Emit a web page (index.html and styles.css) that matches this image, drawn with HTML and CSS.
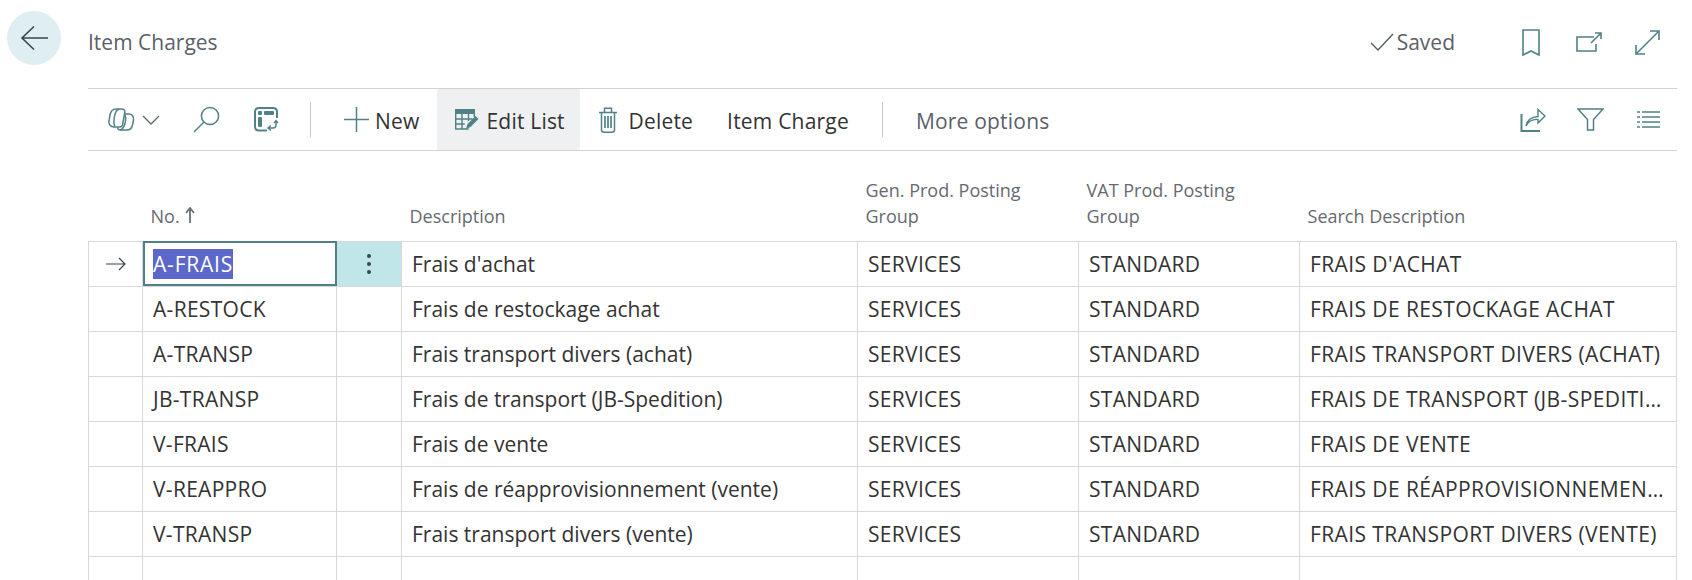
FILE: index.html
```html
<!DOCTYPE html>
<html lang="en">
<head>
<meta charset="utf-8">
<title>Item Charges</title>
<link rel="stylesheet" href="styles.css">
</head>
<body>
<div class="page">
  <a class="back" href="#" aria-label="Back">
    <svg width="30" height="26" viewBox="0 0 30 26"><path d="M14 1.5 2 13l12 11.500M2 13h26" fill="none" stroke="#37474a" stroke-width="1.600"/></svg>
  </a>
  <main class="content">
    <header class="head">
      <h1 class="title">Item Charges</h1>
      <div class="status">
        <svg width="24" height="18" viewBox="0 0 24 18"><path d="M1 10l7 7L23 1" fill="none" stroke="#555d66" stroke-width="1.400"/></svg>
        <span>Saved</span>
      </div>
      <div class="head-icons">
        <svg class="i-book" width="18" height="27" viewBox="0 0 18 27"><path d="M1 1h16v25l-8-4-8 4z" fill="none" stroke="#4f8187" stroke-width="1.600"/></svg>
        <svg class="i-open" width="26" height="20" viewBox="0 0 26 20"><path d="M18 5H1v14h19v-7M15 11 25 1M19 1h6v6" fill="none" stroke="#4f8187" stroke-width="1.600"/></svg>
        <svg class="i-exp" width="25" height="25" viewBox="0 0 25 25"><path d="M1 24 24 1M15 1h9v9M1 15v9h9" fill="none" stroke="#4f8187" stroke-width="1.600"/></svg>
      </div>
    </header>
    <nav class="bar">
      <div class="tool tool-copilot">
        <svg width="27" height="23" viewBox="0 0 27 23"><g fill="none" stroke="#4f8187" stroke-width="1.500"><path d="M8 1h6c2 0 3.200 1.500 2.800 3.500L14.500 17c-.4 1.500-1.500 2-3 2H6c-3.500 0-5.500-2.500-5-6l1-6C2.700 3.500 5 1 8 1z"/><path d="M17 6h4c3 0 5 2.500 4.500 6l-1 5c-.7 3-2.500 5-5.500 5h-7c-1.500 0-2.500-1-2.300-2.500"/><path d="M16.800 7c1.500 2 1 5 .3 8s-2 6-5 7"/><path d="M11 1.200c-3 1-4 4-4.500 7s-1 8.500.5 10.500"/></g></svg>
        <svg width="18" height="10" viewBox="0 0 18 10"><path d="M1 1l8 8 8-8" fill="none" stroke="#5e6b70" stroke-width="1.300"/></svg>
      </div>
      <div class="tool tool-search">
        <svg width="27" height="27" viewBox="0 0 27 27"><circle cx="17" cy="10" r="8.600" fill="none" stroke="#4f8187" stroke-width="1.500"/><path d="M11 16 1 26" fill="none" stroke="#4f8187" stroke-width="1.500"/></svg>
      </div>
      <div class="tool tool-layout">
        <svg width="25" height="25" viewBox="0 0 25 25"><path d="M13 23.500H5c-2.500 0-4-1.500-4-4V5c0-2.500 1.500-4 4-4h14c2.500 0 4 1.500 4 4v6" fill="none" stroke="#4f8187" stroke-width="2"/><rect x="4" y="4" width="4" height="4" rx="1" fill="#4f8187"/><rect x="10" y="4" width="10" height="4" rx="1" fill="#4f8187"/><rect x="4" y="10" width="4" height="10" rx="1" fill="#4f8187"/><path d="M22 14v4c0 2-1 3-3 3h-5M20 16l2-2.500 2 2.500M17 18.500 14 21l3 2.500" fill="none" stroke="#4f8187" stroke-width="1.400"/></svg>
      </div>
      <span class="sep sep-a"></span>
      <button class="btn btn-new">
        <svg width="25" height="25" viewBox="0 0 25 25"><path d="M12.500 0v25M0 12.500h25" stroke="#4f8187" stroke-width="1.500"/></svg>
        <span>New</span>
      </button>
      <button class="btn btn-edit">
        <svg width="24" height="21" viewBox="0 0 24 21"><path d="M0 0h20v5H0z" fill="#4f8187"/><path d="M.7 5v15h13M7 5v15M13.500 5v7M19.300 5v3M.7 10h17M.7 15h9" fill="none" stroke="#4f8187" stroke-width="1.400"/><path d="M11 20l1.500-5 8-8 3 3-8 8z" fill="#4f8187"/></svg>
        <span>Edit List</span>
      </button>
      <button class="btn btn-del">
        <svg width="18" height="26" viewBox="0 0 18 26"><path d="M2.500 6v17c0 1.500 1 2.200 2.500 2.200h8c1.500 0 2.500-.7 2.500-2.200V6M0 5.500h18M5.500 5.500V1.200h7v4.300" fill="none" stroke="#4f8187" stroke-width="1.500"/><path d="M6 9v12M9 9v12M12 9v12" fill="none" stroke="#4f8187" stroke-width="1.700"/></svg>
        <span>Delete</span>
      </button>
      <button class="btn btn-item"><span>Item Charge</span></button>
      <span class="sep sep-b"></span>
      <button class="btn btn-more"><span>More options</span></button>
      <div class="bar-right">
        <svg class="i-share" width="26" height="24" viewBox="0 0 26 24"><path d="M1.500 6v17H20" fill="none" stroke="#4f8187" stroke-width="2"/><path d="M6 18c1-6 5-9 12-9.500V1.500L25 8l-7 7v-3.500c-5-.5-9 1-12 6.500z" fill="none" stroke="#4f8187" stroke-width="1.400"/></svg>
        <svg class="i-filter" width="27" height="23" viewBox="0 0 27 23"><path d="M1 1h25L16.500 11.500V22h-6V11.500z" fill="none" stroke="#4f8187" stroke-width="1.500"/></svg>
        <svg width="23" height="17" viewBox="0 0 23 17"><path d="M0 1h3M5 1h18M0 6h3M5 6h18M0 11h3M5 11h18M0 16h3M5 16h18" stroke="#4f8187" stroke-width="1.300"/></svg>
      </div>
    </nav>
    <table class="grid">
      <colgroup>
        <col class="c-mark"><col class="c-no"><col class="c-dots"><col class="c-desc"><col class="c-gen"><col class="c-vat"><col class="c-search">
      </colgroup>
      <thead>
        <tr>
          <th></th>
          <th class="th-no" colspan="2">No. <svg class="sort" width="10" height="16" viewBox="0 0 10 16"><path d="M5 16V1M1 6l4-5 4 5" fill="none" stroke="#6b7075" stroke-width="1.800"/></svg></th>
          <th>Description</th>
          <th>Gen. Prod. Posting<br>Group</th>
          <th>VAT Prod. Posting<br>Group</th>
          <th>Search Description</th>
        </tr>
      </thead>
      <tbody>
        <tr>
          <td class="mark"><svg width="20" height="14" viewBox="0 0 20 14"><path d="M0 7h19M13 1l6 6-6 6" fill="none" stroke="#37474a" stroke-width="1.200"/></svg></td>
          <td class="focus"><span class="sel">A-FRAIS</span></td>
          <td class="dots"><span class="dot"></span><span class="dot"></span><span class="dot"></span></td>
          <td>Frais d'achat</td><td>SERVICES</td><td>STANDARD</td><td>FRAIS D'ACHAT</td>
        </tr>
        <tr><td></td><td>A-RESTOCK</td><td></td><td>Frais de restockage achat</td><td>SERVICES</td><td>STANDARD</td><td>FRAIS DE RESTOCKAGE ACHAT</td></tr>
        <tr><td></td><td>A-TRANSP</td><td></td><td>Frais transport divers (achat)</td><td>SERVICES</td><td>STANDARD</td><td>FRAIS TRANSPORT DIVERS (ACHAT)</td></tr>
        <tr><td></td><td>JB-TRANSP</td><td></td><td>Frais de transport (JB-Spedition)</td><td>SERVICES</td><td>STANDARD</td><td>FRAIS DE TRANSPORT (JB-SPEDITION)</td></tr>
        <tr><td></td><td>V-FRAIS</td><td></td><td>Frais de vente</td><td>SERVICES</td><td>STANDARD</td><td>FRAIS DE VENTE</td></tr>
        <tr><td></td><td>V-REAPPRO</td><td></td><td>Frais de réapprovisionnement (vente)</td><td>SERVICES</td><td>STANDARD</td><td>FRAIS DE RÉAPPROVISIONNEMENT (VENTE)</td></tr>
        <tr><td></td><td>V-TRANSP</td><td></td><td>Frais transport divers (vente)</td><td>SERVICES</td><td>STANDARD</td><td>FRAIS TRANSPORT DIVERS (VENTE)</td></tr>
        <tr><td></td><td></td><td></td><td></td><td></td><td></td><td></td></tr>
      </tbody>
    </table>
  </main>
</div>
</body>
</html>
```

FILE: styles.css
```css
* { box-sizing: border-box; }
html, body { margin: 0; height: 580px; overflow: hidden; background: #fff; }
body { font-family: "Open Sans", "Noto Sans", sans-serif; color: #333; }
.page { display: flex; align-items: flex-start; height: 580px; overflow: hidden; padding: 11px 15px 0 7px; }
.back { flex: none; width: 54px; height: 54px; border-radius: 50%; background: #dfeef1; display: flex; align-items: center; justify-content: center; margin-right: 27px; padding-left: 2px; }
.content { flex: 1; min-width: 0; margin-top: -11px; }
.head { height: 89px; border-bottom: 1px solid #d2d2d2; display: flex; align-items: center; padding-bottom: 4px; }
.title { margin: 0; font-size: 21px; font-weight: 400; color: #5b6069; flex: 1; }
.status { display: flex; align-items: center; gap: 3px; font-size: 21px; color: #5b6069; margin-right: 67px; }
.head-icons { display: flex; align-items: center; padding-right: 17px; }
.i-book { margin-right: 36px; }
.i-open { margin-right: 33px; }
.bar { height: 62px; border-bottom: 1px solid #d2d2d2; display: flex; align-items: stretch; }
.tool { display: flex; align-items: center; }
.tool-copilot { margin-left: 20px; gap: 7px; }
.tool-search { margin-left: 33px; }
.tool-layout { margin-left: 34px; }
.sep { flex: none; width: 1px; background: #c8c8c8; margin: 13px 0; }
.sep-a { margin-left: 31px; }
.sep-b { margin-left: 33px; }
.btn { border: 0; background: none; font: inherit; font-size: 21px; letter-spacing: .2px; color: #333; display: flex; align-items: center; padding: 0; }
.btn span { position: relative; top: 1px; }
.btn-new { margin-left: 33px; gap: 6px; padding-right: 18px; }
.btn-edit { width: 143px; background: #eef0f1; border-radius: 2px; padding-left: 18px; gap: 7px; }
.btn-del { margin-left: 19px; gap: 11px; }
.btn-item { margin-left: 34px; }
.btn-more { margin-left: 33px; color: #5b6069; }
.bar-right { margin-left: auto; display: flex; align-items: center; gap: 33px; padding-right: 17px; }
.i-share { margin-right: -2px; }
.grid { width: 1589px; table-layout: fixed; border-collapse: collapse; font-size: 21px; }
.c-mark { width: 54px; }
.c-no { width: 194px; }
.c-dots { width: 65px; }
.c-desc { width: 456px; }
.c-gen { width: 221px; }
.c-vat { width: 221px; }
thead th { height: 90px; vertical-align: bottom; text-align: left; font-weight: 400; font-size: 18px; line-height: 26px; color: #666a70; padding: 0 0 12px 8px; }
.th-no { padding-left: 8px; }
.sort { vertical-align: 0; margin-left: 1px; }
tbody td { height: 45px; border: 1px solid #d8d8d8; padding: 1px 10px 0; white-space: nowrap; overflow: hidden; text-overflow: ellipsis; }
tbody td:nth-child(2), tbody td:nth-child(5), tbody td:nth-child(6) { letter-spacing: .3px; }
tbody td:nth-child(7) { letter-spacing: .4px; }
.mark { padding: 0 0 0 17px; }
.mark svg { display: block; }
.focus { outline: 2px solid #4f8187; outline-offset: -2px; padding-left: 10px; }
tbody td.focus { letter-spacing: .8px; }
.sel { background: #5b67c9; color: #fff; display: inline-block; line-height: 30px; }
.dots { background: #c1e6ea; padding: 0; text-align: center; font-size: 0; }
.dot { display: block; width: 4px; height: 4px; border-radius: 50%; background: #37474a; margin: 4px auto; }
```
